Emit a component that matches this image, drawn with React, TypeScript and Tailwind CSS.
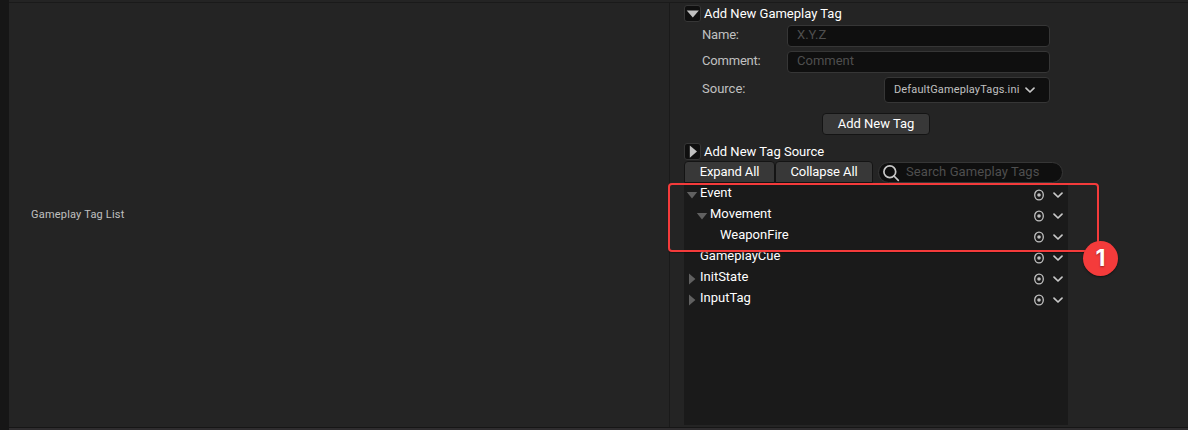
import type { ReactNode } from "react";

const Chevron = () => (
  <svg width="12" height="8" viewBox="0 0 12 8" fill="none" stroke="#c8c8c8" strokeWidth="1.7" strokeLinecap="round" strokeLinejoin="round">
    <path d="M2 2.2 6 6 10 2.2" />
  </svg>
);

const Target = () => (
  <svg width="12" height="12" viewBox="0 0 12 12" fill="none">
    <ellipse cx="6" cy="6" rx="4.3" ry="4.9" stroke="#c0c0c0" strokeWidth="1.3" />
    <circle cx="6" cy="6" r="1.8" fill="#c0c0c0" />
  </svg>
);

function Expander({ open, label }: { open?: boolean; label: string }) {
  return (
    <div className="flex h-[17px] items-center">
      <div className="flex h-[17px] w-[17px] items-center justify-center rounded-[3px] border border-[#363636] bg-[#0f0f0f]">
        <svg width="15" height="15" viewBox="0 0 15 15" fill="#c0c0c0" className="shrink-0">
          {open ? <path d="M1.7 4.4h12.2L7.8 11.6z" /> : <path d="M4.8 1.5v12.2L12 7.6z" />}
        </svg>
      </div>
      <span className="ml-[3px] text-[13px] leading-[17px] text-white">{label}</span>
    </div>
  );
}

function Field({ label, children }: { label: string; children: ReactNode }) {
  return (
    <div className="flex h-[22px] w-[348px] justify-between">
      <span className="pt-[2px] text-[13px] leading-[16px] tracking-[-0.2px] text-[#c0c0c0]">{label}</span>
      {children}
    </div>
  );
}

function TextInput({ placeholder }: { placeholder: string }) {
  return (
    <div className="h-[22px] w-[263px] rounded-[4px] border border-[#363636] bg-[#0f0f0f] pl-[9px] text-[13px] leading-[18px] text-[#4e4e4e]">
      {placeholder}
    </div>
  );
}

type Row = { name: string; pad: string; arrow?: "open" | "closed" };

const rows: Row[] = [
  { name: "Event", pad: "pl-0", arrow: "open" },
  { name: "Movement", pad: "pl-[10px]", arrow: "open" },
  { name: "WeaponFire", pad: "pl-[20px]" },
  { name: "GameplayCue", pad: "pl-0" },
  { name: "InitState", pad: "pl-0", arrow: "closed" },
  { name: "InputTag", pad: "pl-0", arrow: "closed" },
];

function TagRow({ name, pad, arrow }: Row) {
  return (
    <div className={`flex h-[21px] ${pad}`}>
      <svg width="16" height="21" viewBox="0 0 16 21" fill="#606060" className="shrink-0">
        {arrow === "open" && <path d="M2.8 9h10.4L8 15.4z" />}
        {arrow === "closed" && <path d="M5 6.6v10.8L11.4 12z" />}
      </svg>
      <span className="text-[13px] leading-[19px] text-white">{name}</span>
      <div className="ml-auto flex gap-[7px] pr-1 pt-[6px]">
        <Target />
        <div className="pt-[2px]">
          <Chevron />
        </div>
      </div>
    </div>
  );
}

export default function App() {
  return (
    <div className="relative flex h-[430px] w-[1188px] overflow-hidden bg-[#242424] font-['Roboto',sans-serif]">
      <div className="w-[9px] shrink-0 bg-[#161616]" />
      <div className="flex flex-1 flex-col">
        <div className="h-[3px] border-b border-[#1a1a1a]" />
        <div className="flex h-[424px]">
          <div className="flex w-[661px] items-center border-r border-[#1a1a1a] pl-[22px] text-[11px] tracking-[0.2px] text-[#c0c0c0]">
            Gameplay Tag List
          </div>
          <div className="w-[398px] pl-[14px] pt-[2px]">
            <Expander open label="Add New Gameplay Tag" />
            <div className="flex flex-col gap-[4px] pl-[18px] pt-[3px]">
              <Field label="Name:">
                <TextInput placeholder="X.Y.Z" />
              </Field>
              <Field label="Comment:">
                <TextInput placeholder="Comment" />
              </Field>
              <div className="flex h-[26px] w-[348px] justify-between">
                <span className="pt-[4px] text-[13px] leading-[16px] text-[#c0c0c0]">Source:</span>
                <div className="flex h-[26px] w-[166px] items-center rounded-[4px] border border-[#363636] bg-[#0f0f0f] pl-[9px] text-[11px] tracking-[0.14px] text-[#c0c0c0]">
                  <span className="w-[130px]">DefaultGameplayTags.ini</span>
                  <Chevron />
                </div>
              </div>
            </div>
            <div className="flex pl-[138px] pt-[10px]">
              <div className="h-[22px] w-[108px] rounded-[4px] border border-[#141414] bg-[#383838] text-center text-[13px] leading-[20px] text-white">
                Add New Tag
              </div>
            </div>
            <div className="pt-[8px]">
              <Expander label="Add New Tag Source" />
            </div>
            <div className="flex h-[23px] pt-px">
              <div className="h-[22px] w-[91px] rounded-t-[4px] border border-[#141414] bg-[#383838] text-center text-[13px] leading-[20px] tracking-[-0.1px] text-white">
                Expand All
              </div>
              <div className="h-[22px] w-[98px] rounded-t-[4px] border border-[#141414] bg-[#383838] text-center text-[13px] leading-[20px] tracking-[-0.1px] text-white">
                Collapse All
              </div>
              <div className="ml-[5px] mt-px flex h-[21px] w-[185px] items-center rounded-full border border-[#363636] bg-[#0f0f0f] pl-[3px]">
                <svg width="18" height="18" viewBox="0 0 18 18" fill="none" stroke="#c8c8c8" strokeWidth="1.7" className="mt-px">
                  <circle cx="7.8" cy="7.8" r="5.9" />
                  <path d="m12 12 4.3 4.3" strokeLinecap="round" />
                </svg>
                <span className="-mt-[2px] ml-[6px] text-[13px] leading-[16px] tracking-[0.07px] text-[#4e4e4e]">Search Gameplay Tags</span>
              </div>
            </div>
            <div className="h-[242px] w-[384px] bg-[#1a1a1a]">
              {rows.map((r) => (
                <TagRow key={r.name} {...r} />
              ))}
            </div>
          </div>
        </div>
        <div className="h-[3px] border-t border-[#161616] bg-[#2f2d2f]" />
      </div>
      <div className="absolute left-[668px] top-[183px] h-[69px] w-[431px] rounded-[4px] border-2 border-[#f43b3b] shadow-[0_1px_1px_rgba(0,0,0,0.35)]" />
      <div className="absolute left-[1083px] top-[241px] flex h-[35px] w-[35px] items-center justify-center rounded-full bg-[#f43b3b] shadow-[0_1px_2px_rgba(0,0,0,0.5)]">
        <span className="font-['Inter',sans-serif] text-[23px] font-bold leading-none text-white [text-shadow:0_1px_2px_rgba(0,0,0,0.4)]">1</span>
      </div>
    </div>
  );
}
